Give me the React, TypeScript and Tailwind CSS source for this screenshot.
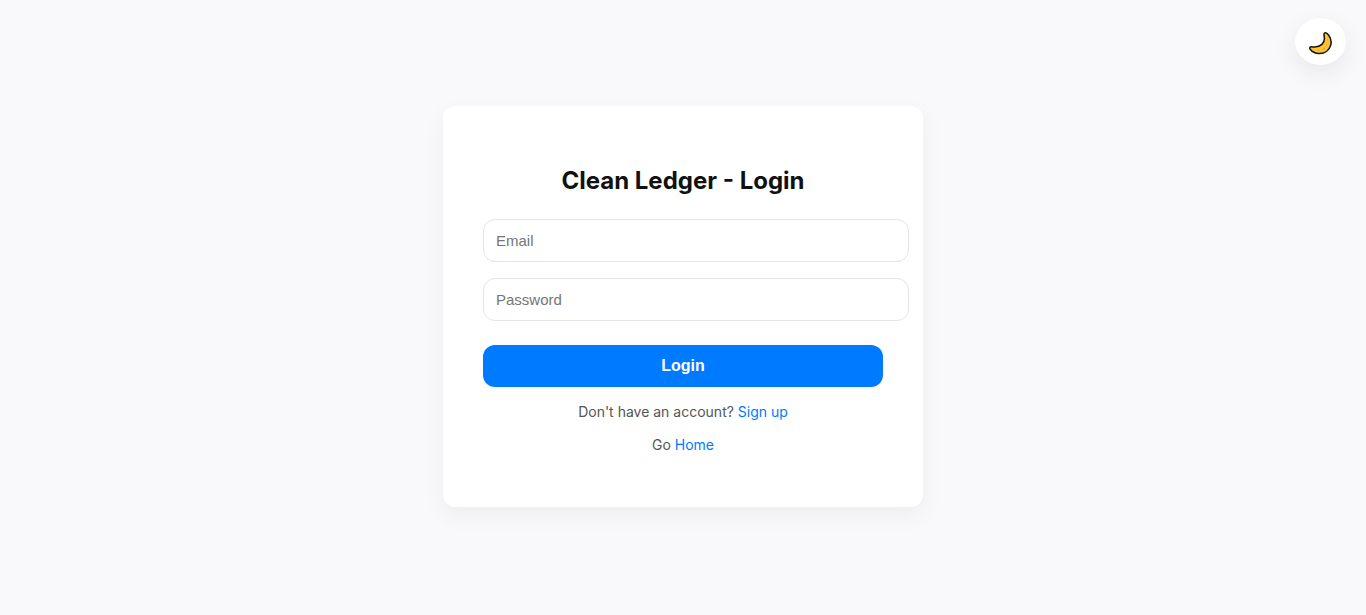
import { useState } from "react";
import type { FormEvent } from "react";

function MoonIcon() {
  return (
    <svg viewBox="0 0 24 24" className="h-6 w-6" aria-hidden="true">
      <path
        d="M15.700 2C17 1.400 18.500 2.700 19.700 4.300C21.900 7.200 22.700 10.700 21.700 14.300C20.200 19.500 15.600 22.800 10 22.500C6.100 22.300 2.800 20.400 1.200 18.200C.3 16.900 1 15.500 2.600 15.700C6 16.200 10.200 15.900 12.900 13.400C15.300 11.200 15.800 8.200 15.200 5.300C14.800 3.700 14.600 2.600 15.700 2Z"
        fill="#fdc233"
        stroke="#111111"
        strokeWidth="1.5"
        strokeLinejoin="round"
      />
      <g fill="#f5a623">
        <circle cx="18.500" cy="8.500" r="1" />
        <circle cx="18.500" cy="13.500" r=".8" />
        <circle cx="15" cy="18" r="1.100" />
        <circle cx="9.500" cy="19" r="1" />
      </g>
    </svg>
  );
}

function Field({ id, label, type }: { id: string; label: string; type: string }) {
  return (
    <div className="-mr-[26px]">
      <input
        id={id}
        name={id}
        type={type}
        aria-label={label}
        placeholder={label}
        className="block h-[43px] w-full rounded-xl border border-[#e5e5e7] bg-white px-3 font-['Liberation_Sans',Arial,sans-serif] text-[15px] text-[#111111] outline-none placeholder:text-[#757575] focus:border-[#007aff]"
      />
    </div>
  );
}

export default function App() {
  const [dark, setDark] = useState(false);
  const submit = (event: FormEvent) => event.preventDefault();

  return (
    <div
      className={`relative flex min-h-screen items-center justify-center pb-0.5 font-[Inter,sans-serif] ${
        dark ? "bg-[#111111]" : "bg-[#f9f9fb]"
      }`}
    >
      <button
        type="button"
        aria-label="Toggle dark mode"
        onClick={() => setDark(!dark)}
        className="absolute top-[18px] right-5 flex h-[47px] w-[51px] cursor-pointer items-center justify-center rounded-[50%] bg-white pt-0.5 shadow-[0_8px_24px_rgba(0,0,0,0.08)]"
      >
        <MoonIcon />
      </button>

      <main className="w-full max-w-[480px] rounded-xl bg-white p-10 text-center shadow-[0_8px_24px_rgba(0,0,0,0.05)]">
        <h1 className="mt-5 mb-6 text-2xl leading-[29px] font-bold text-[#111111]">
          Clean Ledger - Login
        </h1>
        <form onSubmit={submit} className="flex flex-col">
          <div className="flex flex-col gap-4">
            <Field id="email" label="Email" type="email" />
            <Field id="password" label="Password" type="password" />
          </div>
          <button
            type="submit"
            className="mt-6 h-[42px] cursor-pointer rounded-xl bg-[#007aff] font-['Liberation_Sans',Arial,sans-serif] text-base font-bold text-white"
          >
            Login
          </button>
        </form>
        <div className="mt-4 mb-3.5 flex flex-col gap-4 text-sm leading-[17px] text-[#555555]">
          <p>
            Don't have an account?{" "}
            <a href="#signup" className="text-[#007aff]">
              Sign up
            </a>
          </p>
          <p>
            Go{" "}
            <a href="#home" className="text-[#007aff]">
              Home
            </a>
          </p>
        </div>
      </main>
    </div>
  );
}
